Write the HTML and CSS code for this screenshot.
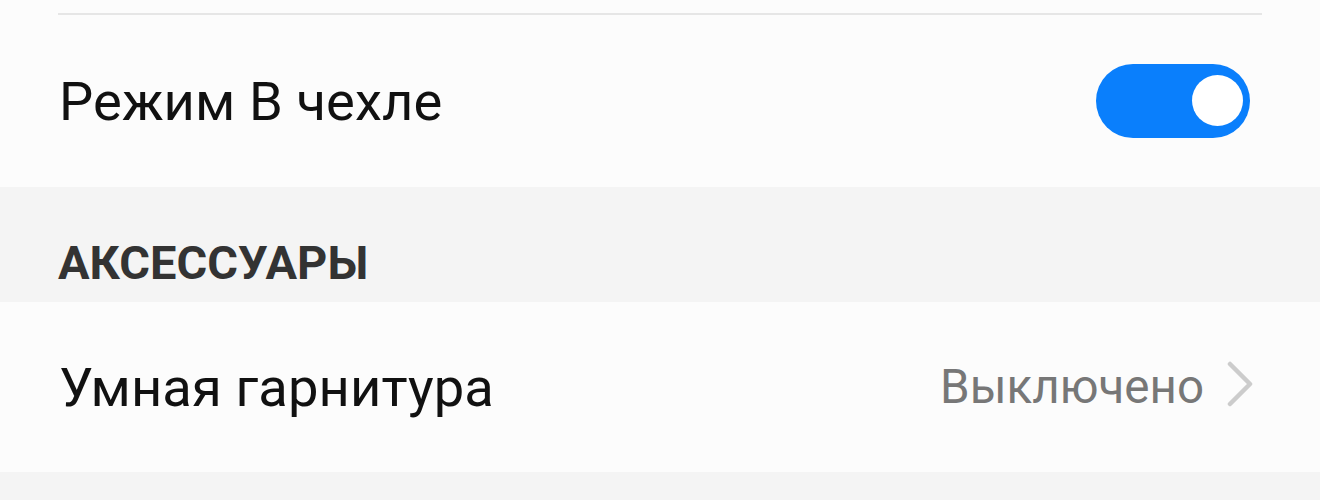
FILE: index.html
```html
<!DOCTYPE html>
<html lang="ru">
<head>
<meta charset="utf-8">
<link rel="stylesheet" href="styles.css">
</head>
<body>
<div class="screen">
  <div class="prev-row"><div class="divider"></div></div>
  <div class="row">
    <span class="label">Режим В чехле</span>
    <div class="switch on"><div class="knob"></div></div>
  </div>
  <div class="section-header">АКСЕССУАРЫ</div>
  <div class="row">
    <span class="label">Умная гарнитура</span>
    <div class="value-wrap">
      <span class="value">Выключено</span>
      <svg class="chevron" width="28" height="46" viewBox="0 0 28 46"><path d="M4 3 L24 23 L4 43" fill="none" stroke="#cccccc" stroke-width="4.5" stroke-linecap="round" stroke-linejoin="round"/></svg>
    </div>
  </div>
  <div class="bottom-gap"></div>
</div>
</body>
</html>
```
FILE: styles.css
```css
html, body {
  margin: 0;
  padding: 0;
  background: #f4f4f4;
}
.screen {
  width: 1320px;
  height: 500px;
  overflow: hidden;
  font-family: Roboto, "Noto Sans", sans-serif;
  background: #f4f4f4;
}
.prev-row {
  height: 16px;
  background: #fcfcfc;
  display: flex;
  flex-direction: column;
  justify-content: flex-end;
  padding: 0 58px;
}
.divider {
  height: 2px;
  background: #e6e6e6;
  margin-bottom: 1px;
}
.row {
  height: 171px;
  background: #fcfcfc;
  display: flex;
  align-items: center;
  justify-content: space-between;
  padding: 0 68px 0 59px;
  box-sizing: border-box;
}
.row + .section-header + .row {
  height: 170px;
}
.label {
  font-size: 54.3px;
  color: #111111;
  letter-spacing: 0.1px;
}
.switch {
  width: 154px;
  height: 74px;
  border-radius: 37px;
  background: #0a7ffc;
  display: flex;
  align-items: center;
  justify-content: flex-end;
  padding: 0 7px;
  box-sizing: border-box;
  margin-right: 2px;
  margin-top: -2px;
}
.knob {
  width: 51px;
  height: 51px;
  border-radius: 50%;
  background: #ffffff;
}
.section-header {
  height: 115px;
  box-sizing: border-box;
  padding: 48px 0 0 58px;
  font-size: 47px;
  font-weight: 700;
  color: #333333;
  background: #f4f4f4;
  line-height: 56px;
}
.value-wrap {
  display: flex;
  align-items: center;
  gap: 22px;
  margin-right: -2px;
}
.value {
  font-size: 47.5px;
  color: #777777;
}
.chevron {
  display: block;
  margin-top: -6px;
}
.bottom-gap {
  height: 28px;
  background: #f4f4f4;
}
```
